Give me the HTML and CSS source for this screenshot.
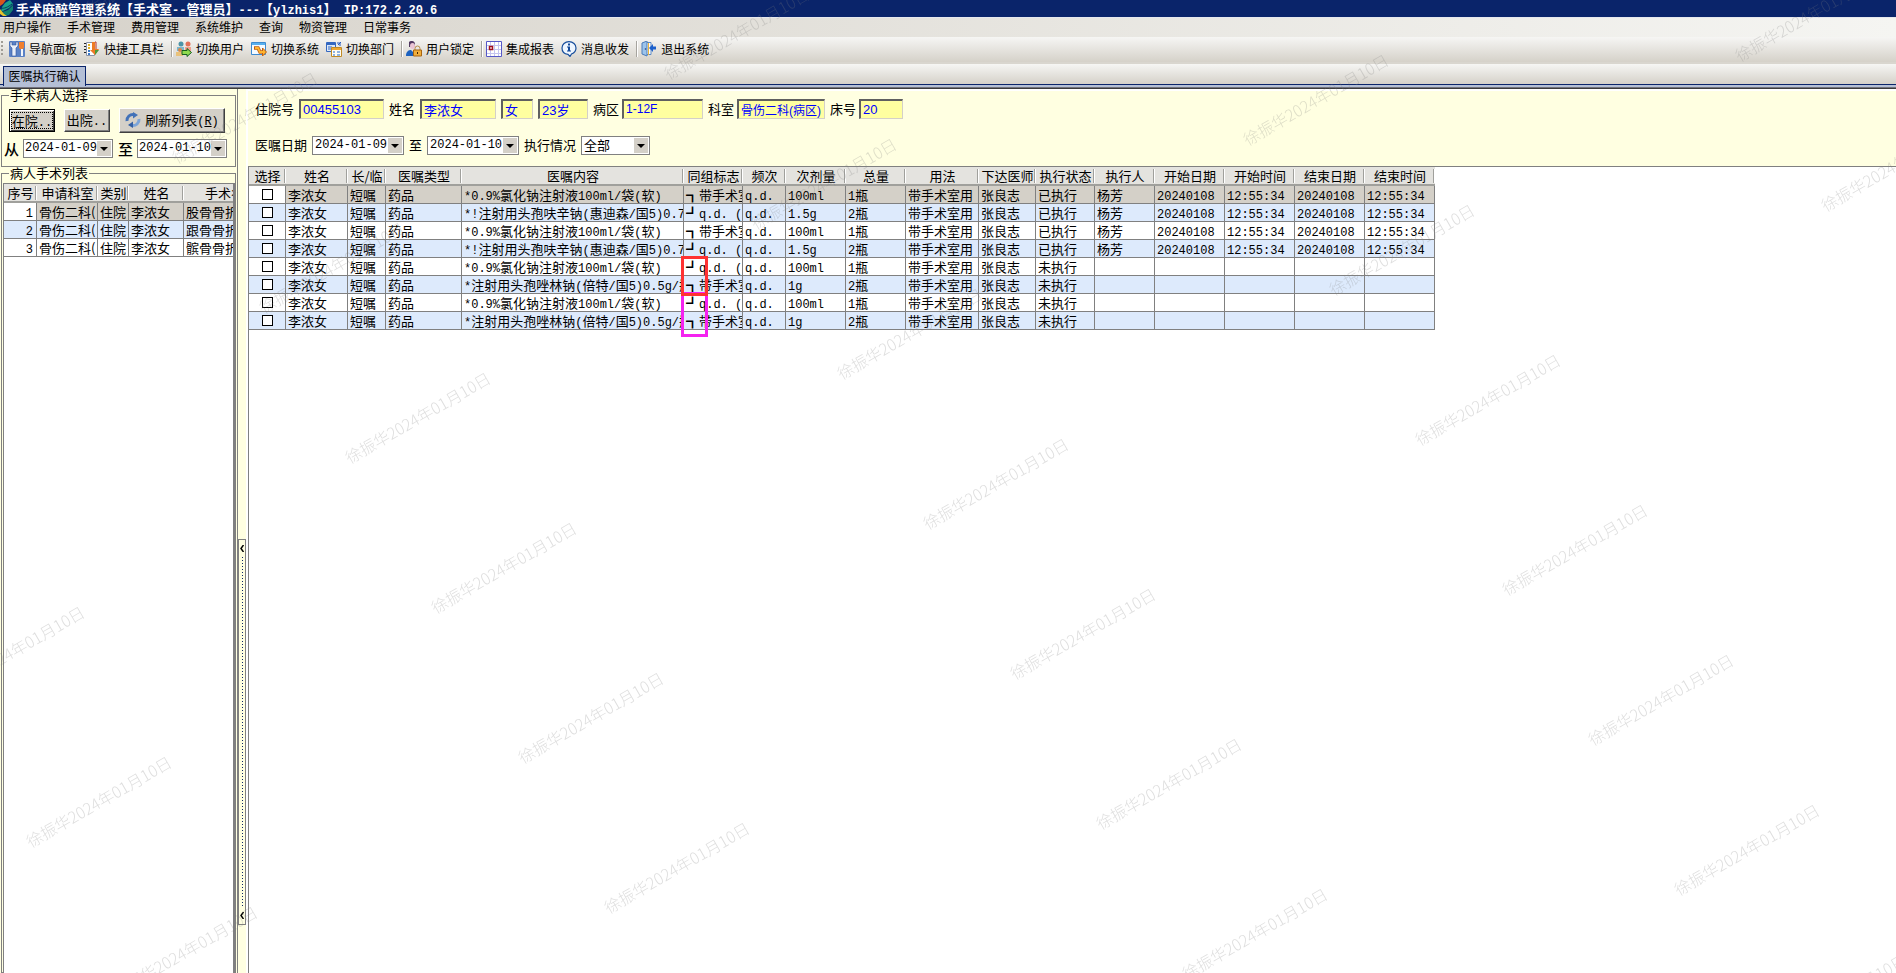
FILE: index.html
```html
<!DOCTYPE html>
<html lang="zh-CN">
<head>
<meta charset="utf-8">
<title>手术麻醉管理系统</title>
<link rel="stylesheet" href="styles.css">
</head>
<body>
<header class="titlebar">
  <svg class="logo" width="14" height="17" viewBox="0 0 14 17"><path d="M0 0h6l-3 4-3 2z" fill="#d8541c"/><path d="M5 3l5-3 3 4-4 4-8 4 1-5z" fill="#19a08c"/><path d="M13 5v5l-4 5-4 1-3-4 6-2z" fill="#12806f"/><path d="M0 9l4 5 3 2H3L0 14z" fill="#e8c22c"/><path d="M1 8c3 1 7-1 11-4" stroke="#063a5c" fill="none"/></svg>
  <h1 class="title">手术麻醉管理系统【手术室<span class="en">--</span>管理员】<span class="en">---</span>【<span class="en">ylzhis1</span>】<span class="en">&nbsp;IP:172.2.20.6</span></h1>
</header>
<nav class="menubar">
  <button>用户操作</button><button>手术管理</button><button>费用管理</button><button>系统维护</button><button>查询</button><button>物资管理</button><button>日常事务</button>
</nav>
<div class="toolbar">
  <span class="grip"></span>
  <button><svg width="16" height="16" viewBox="0 0 16 16"><rect width="16" height="16" rx="1" fill="#5b82c6"/><path d="M1 1v4l2 2v8h4V7l2-2V1H7v3H3V1z" fill="#e9eef8" stroke="#34549c" stroke-width=".6"/><path d="M10 1h5v6l-2 1h-2l-1-1z" fill="#f08030"/><path d="M12 8h2v7h-2z" fill="#f4f6fa"/></svg>导航面板</button>
  <button><svg width="16" height="16" viewBox="0 0 16 16"><path d="M2.500 1.500h8v13h-8z" fill="#fff" stroke="#8a93a8"/><path d="M1 2v1M1 5v1M1 8v1M1 11v1" stroke="#222" stroke-width="2"/><path d="M4 4h2M4 7h2" stroke="#e0b020" stroke-width="2"/><path d="M4 10h2M4 13h2" stroke="#3a78c8" stroke-width="2"/><path d="M8 1h3v7h4l-4 6-5-5h2z" fill="#ee7a24"/><path d="M11 1h1v7" fill="none" stroke="#b8332a"/><path d="M11 9h4l-4 5z" fill="#4b9a3b"/></svg>快捷工具栏</button>
  <span class="sep"></span>
  <button><svg width="16" height="16" viewBox="0 0 16 16"><circle cx="5" cy="3" r="2.500" fill="#4c94a8"/><circle cx="12" cy="3" r="2.500" fill="#e2725a"/><path d="M1 6h7v4H1z" fill="#79b8d0"/><path d="M9 6h6v4H9z" fill="#f0a08c"/><circle cx="4" cy="9" r="2" fill="#d9874c"/><path d="M0 11h7v4H0z" fill="#e9c27a"/><path d="M6 9.500h5v-2l4.500 4-4.500 4v-2H6z" fill="#8edb4e" stroke="#175f20"/></svg>切换用户</button>
  <button><svg width="16" height="16" viewBox="0 0 16 16"><path d="M.5 1.500h14v12H.5z" fill="#f4faff" stroke="#3d8ad0"/><path d="M1 2h13v2H1z" fill="#58b0ee"/><path d="M3 7h4l2 4h3" fill="none" stroke="#c05c10" stroke-width="3.500"/><path d="M11.500 7l4 4-4 4z" fill="#ffb52e" stroke="#c05c10"/><path d="M4 7h3l2 4h3" fill="none" stroke="#ffb52e" stroke-width="1.800"/></svg>切换系统</button>
  <button><svg width="16" height="16" viewBox="0 0 16 16"><path d="M.5 1.500h9v9h-9z" fill="#dce8f8" stroke="#3468c0"/><path d="M1 2h8v2H1z" fill="#3468c0"/><path d="M2 6h4M2 8h4" stroke="#3468c0"/><path d="M11 2h3v3M12 4l3-3" fill="none" stroke="#2458c0"/><path d="M5.500 6.500h10v9h-10z" fill="#fffdf4" stroke="#c08a24"/><path d="M6 7h9v2H6z" fill="#f0a832"/><path d="M7 10h2v2H7zM11 10h3v2h-3zM7 13h2v2H7zM11 13h3v2h-3z" fill="#8eb4e4"/></svg>切换部门</button>
  <span class="sep"></span>
  <button><svg width="16" height="16" viewBox="0 0 16 16"><path d="M3 1c2-2 6-1 6 2v3H3z" fill="#503860"/><ellipse cx="6.500" cy="5" rx="2.500" ry="3" fill="#eac4d4"/><path d="M0 15c0-5 3-6 5-6l2 2 2-2c2 0 3 2 3 6z" fill="#1c62c0"/><path d="M9 9V7.500a2.500 2.500 0 0 1 5 0V9" fill="none" stroke="#b58a48"/><path d="M7.500 9h8v6h-8z" fill="#f0ae3c" stroke="#a86510"/><path d="M11 11h1v2h-1z" fill="#402000"/></svg>用户锁定</button>
  <span class="sep"></span>
  <button><svg width="16" height="16" viewBox="0 0 16 16"><path d="M.5.5h15v15H.5z" fill="#fff" stroke="#5658c8"/><path d="M1 4.500h14M1 8.500h14M1 12.500h14M4.500 1v14M8.500 1v14M12.500 1v14" stroke="#c4c4f0"/><path d="M3.500 5.500h3v3h-3z" fill="#fff" stroke="#a01020" stroke-width="1.500"/></svg>集成报表</button>
  <button><svg width="16" height="16" viewBox="0 0 16 16"><path d="M8 .7c4 0 7 2.800 7 6.300 0 3-2 5-4.500 6L9 15.500 7 13.300C3.500 13 1 10.500 1 7 1 3.500 4 .7 8 .7z" fill="#eef6ff" stroke="#174e9c" stroke-width="1.200"/><path d="M7 2.500h2v2H7zM6 5.500h3v4h1v1H6v-1h1v-3H6z" fill="#134a9c"/></svg>消息收发</button>
  <span class="sep"></span>
  <button><svg width="16" height="16" viewBox="0 0 16 16"><path d="M3 1.500h7v12H3z" fill="#fff" stroke="#5a88c4"/><path d="M1 2l5-2v15l-5-2z" fill="#9cc4ec" stroke="#4c7cb8"/><path d="M7 2h1v12H7z" fill="#e8b43c"/><circle cx="4.500" cy="8" r=".8" fill="#204080"/><path d="M15 5.500h-3V3L8 7l4 4V8.500h3z" fill="#1c60cc"/></svg>退出系统</button>
</div>
<div class="tabs"><button class="tab">医嘱执行确认</button></div>

<main class="work">
  <aside class="side">
    <fieldset class="group">
      <legend>手术病人选择</legend>
      <div class="actions">
        <button class="btn focus"><span class="face">在院<span class="en">..</span></span></button>
        <button class="btn"><span>出院<span class="en">..</span></span></button>
        <button class="btn refresh"><svg width="16" height="16" viewBox="0 0 16 16"><path d="M2 9A6 6 0 0 1 9 2.500" fill="none" stroke="#4272b8" stroke-width="3"/><path d="M8 0l5 3-5 3.500z" fill="#4272b8"/><path d="M14 7a6 6 0 0 1-7 6.500" fill="none" stroke="#7ca4d8" stroke-width="3"/><path d="M8 16l-5-3 5-3.500z" fill="#3460a4"/></svg><span>刷新列表<span class="en">(<u>R</u>)</span></span></button>
      </div>
      <div class="range">
        <label for="from">从</label><span class="combo"><select id="from" class="en"><option>2024-01-09</option></select></span>
        <label for="to">至</label><span class="combo"><select id="to" class="en"><option>2024-01-10</option></select></span>
      </div>
    </fieldset>
    <fieldset class="group list">
      <legend>病人手术列表</legend>
      <div class="clip">
      <table class="grid patients">
        <colgroup><col class="w33"><col class="w61"><col class="w31"><col class="w55"><col class="w94"></colgroup>
        <thead><tr><th>序号</th><th>申请科室</th><th>类别</th><th>姓名</th><th>手术名称</th></tr></thead>
        <tbody>
          <tr class="cur"><td class="en">1</td><td>骨伤二科(</td><td>住院</td><td>李浓女</td><td>股骨骨折术</td></tr>
          <tr><td class="en">2</td><td>骨伤二科(</td><td>住院</td><td>李浓女</td><td>跟骨骨折术</td></tr>
          <tr><td class="en">3</td><td>骨伤二科(</td><td>住院</td><td>李浓女</td><td>髌骨骨折术</td></tr>
        </tbody>
      </table>
      </div>
    </fieldset>
  </aside>
  <div class="splitter"><button class="handle" aria-label="折叠"><svg width="4" height="7" viewBox="0 0 4 7"><path d="M3.500 0L1 3.500 3.500 7" fill="none" stroke="#000" stroke-width="1.500"/></svg><i></i><svg width="4" height="7" viewBox="0 0 4 7"><path d="M3.500 0L1 3.500 3.500 7" fill="none" stroke="#000" stroke-width="1.500"/></svg></button></div>
  <section class="content">
    <form class="form">
      <div class="line">
        <label for="no">住院号</label><input id="no" class="f85" value="00455103">
        <label for="nm">姓名</label><input id="nm" class="f76" value="李浓女">
        <input aria-label="性别" class="f32" value="女">
        <input aria-label="年龄" class="f50" value="23岁">
        <label for="wd" class="tight">病区</label><input id="wd" class="f81" value="1-12F">
        <label for="dp" class="tight">科室</label><input id="dp" class="f88" value="骨伤二科(病区)">
        <label for="bed" class="tight">床号</label><input id="bed" class="f44" value="20">
      </div>
      <div class="line">
        <label for="d1">医嘱日期</label><span class="combo"><select id="d1" class="en"><option>2024-01-09</option></select></span>
        <label for="d2">至</label><span class="combo"><select id="d2" class="en"><option>2024-01-10</option></select></span>
        <label for="st">执行情况</label><span class="combo small"><select id="st"><option>全部</option></select></span>
      </div>
    </form>
    <div class="sheet">
      <table class="grid orders">
        <colgroup><col class="w37"><col class="w62"><col class="w38"><col class="w76"><col class="w222"><col class="w59"><col class="w43"><col class="w60"><col class="w60"><col class="w73"><col class="w57"><col class="w59"><col class="w60"><col class="w70"><col class="w70"><col class="w70"><col class="w70"></colgroup>
        <thead><tr><th>选择</th><th>姓名</th><th>长/临</th><th>医嘱类型</th><th>医嘱内容</th><th>同组标志</th><th>频次</th><th>次剂量</th><th>总量</th><th>用法</th><th>下达医师</th><th>执行状态</th><th>执行人</th><th>开始日期</th><th>开始时间</th><th>结束日期</th><th>结束时间</th></tr></thead>
        <tbody>
          <tr class="cur"><td><input type="checkbox" aria-label="选择 1"></td><td>李浓女</td><td>短嘱</td><td>药品</td><td><span class="en">*0.9%</span>氯化钠注射液<span class="en">100ml/</span>袋<span class="en">(</span>软<span class="en">)</span></td><td>┓带手术室用</td><td class="en">q.d.</td><td class="en">100ml</td><td><span class="en">1</span>瓶</td><td>带手术室用</td><td>张良志</td><td>已执行</td><td>杨芳</td><td class="en">20240108</td><td class="en">12:55:34</td><td class="en">20240108</td><td class="en">12:55:34</td></tr>
          <tr><td><input type="checkbox" aria-label="选择 2"></td><td>李浓女</td><td>短嘱</td><td>药品</td><td><span class="en">*!</span>注射用头孢呋辛钠<span class="en">(</span>惠迪森<span class="en">/</span>国<span class="en">5)0.75g</span></td><td>┛<span class="en">q.d. (</span></td><td class="en">q.d.</td><td class="en">1.5g</td><td><span class="en">2</span>瓶</td><td>带手术室用</td><td>张良志</td><td>已执行</td><td>杨芳</td><td class="en">20240108</td><td class="en">12:55:34</td><td class="en">20240108</td><td class="en">12:55:34</td></tr>
          <tr><td><input type="checkbox" aria-label="选择 3"></td><td>李浓女</td><td>短嘱</td><td>药品</td><td><span class="en">*0.9%</span>氯化钠注射液<span class="en">100ml/</span>袋<span class="en">(</span>软<span class="en">)</span></td><td>┓带手术室用</td><td class="en">q.d.</td><td class="en">100ml</td><td><span class="en">1</span>瓶</td><td>带手术室用</td><td>张良志</td><td>已执行</td><td>杨芳</td><td class="en">20240108</td><td class="en">12:55:34</td><td class="en">20240108</td><td class="en">12:55:34</td></tr>
          <tr><td><input type="checkbox" aria-label="选择 4"></td><td>李浓女</td><td>短嘱</td><td>药品</td><td><span class="en">*!</span>注射用头孢呋辛钠<span class="en">(</span>惠迪森<span class="en">/</span>国<span class="en">5)0.75g</span></td><td>┛<span class="en">q.d. (</span></td><td class="en">q.d.</td><td class="en">1.5g</td><td><span class="en">2</span>瓶</td><td>带手术室用</td><td>张良志</td><td>已执行</td><td>杨芳</td><td class="en">20240108</td><td class="en">12:55:34</td><td class="en">20240108</td><td class="en">12:55:34</td></tr>
          <tr><td><input type="checkbox" aria-label="选择 5"></td><td>李浓女</td><td>短嘱</td><td>药品</td><td><span class="en">*0.9%</span>氯化钠注射液<span class="en">100ml/</span>袋<span class="en">(</span>软<span class="en">)</span></td><td>┛<span class="en">q.d. (</span></td><td class="en">q.d.</td><td class="en">100ml</td><td><span class="en">1</span>瓶</td><td>带手术室用</td><td>张良志</td><td>未执行</td><td></td><td></td><td></td><td></td><td></td></tr>
          <tr><td><input type="checkbox" aria-label="选择 6"></td><td>李浓女</td><td>短嘱</td><td>药品</td><td><span class="en">*</span>注射用头孢唑林钠<span class="en">(</span>倍特<span class="en">/</span>国<span class="en">5)0.5g/</span>瓶</td><td>┓带手术室用</td><td class="en">q.d.</td><td class="en">1g</td><td><span class="en">2</span>瓶</td><td>带手术室用</td><td>张良志</td><td>未执行</td><td></td><td></td><td></td><td></td><td></td></tr>
          <tr><td><input type="checkbox" aria-label="选择 7"></td><td>李浓女</td><td>短嘱</td><td>药品</td><td><span class="en">*0.9%</span>氯化钠注射液<span class="en">100ml/</span>袋<span class="en">(</span>软<span class="en">)</span></td><td>┛<span class="en">q.d. (</span></td><td class="en">q.d.</td><td class="en">100ml</td><td><span class="en">1</span>瓶</td><td>带手术室用</td><td>张良志</td><td>未执行</td><td></td><td></td><td></td><td></td><td></td></tr>
          <tr><td><input type="checkbox" aria-label="选择 8"></td><td>李浓女</td><td>短嘱</td><td>药品</td><td><span class="en">*</span>注射用头孢唑林钠<span class="en">(</span>倍特<span class="en">/</span>国<span class="en">5)0.5g/</span>瓶</td><td>┓带手术室用</td><td class="en">q.d.</td><td class="en">1g</td><td><span class="en">2</span>瓶</td><td>带手术室用</td><td>张良志</td><td>未执行</td><td></td><td></td><td></td><td></td><td></td></tr>
        </tbody>
      </table>
      <span class="mark magenta"></span>
      <span class="mark red"></span>
    </div>
  </section>
</main>
<svg class="watermark" id="watermark" aria-hidden="true"></svg>
<script src="script.js"></script>
</body>
</html>
```
FILE: styles.css
```css
* { box-sizing: border-box; }
body {
  margin: 0;
  height: 100vh;
  display: flex;
  flex-direction: column;
  overflow: hidden;
  background: #d4d0c8;
  color: #000;
  font: 13px/16px "Noto Sans CJK SC", sans-serif;
}
button, input, select { font: inherit; color: inherit; margin: 0; padding: 0; border: 0; background: none; border-radius: 0; }
svg { display: block; flex: none; }
.en { font-family: "Liberation Mono", "Noto Sans CJK SC", monospace; font-size: 12px; }
span.en { line-height: 0; }

.titlebar { display: flex; align-items: center; gap: 2px; height: 17px; background: #0a246a; color: #fff; }
.title { margin: 0; font-size: 13px; line-height: 15px; font-weight: 700; white-space: pre; }
.menubar { display: flex; align-items: center; gap: 16px; height: 20px; padding: 0 3px 1px; border-top: 1px solid #e6e8ee; background: linear-gradient(90deg, #d6d2ca, #f5f5f2); font-size: 12px; }
.toolbar { display: flex; align-items: center; gap: 7px; height: 27px; padding: 0 1px 1px; border-bottom: 2px solid #d9d6cf; background: linear-gradient(#f6f6f4, #d5d1c9); font-size: 12px; }
.toolbar button { display: flex; align-items: center; gap: 4px; }
.grip { width: 2px; height: 16px; margin-right: -1px; background: repeating-linear-gradient(#a09d96 0 2px, transparent 2px 4px); }
.sep { width: 1px; height: 16px; margin-right: -3px; background: #a6a49e; box-shadow: 1px 0 #fff; }
.tabs { height: 25px; padding: 2px 3px 0; background: linear-gradient(#f6f6f4, #d5d1c9 20px, #0a246a 20px, #0a246a 21px, #b4bfd6 21px, #b4bfd6 23px, #71717b 23px, #71717b 24px, #3c3c3c 24px); }
.tab { display: block; width: 83px; height: 20px; padding-bottom: 2px; border: 1px solid #0a246a; border-bottom: 0; background: #b4bfd6; font-size: 12px; line-height: 16px; }

.work { flex: 1; min-height: 0; display: flex; background: #ffffe1; }
.side { width: 238px; flex: none; display: flex; flex-direction: column; padding-left: 1px; border-right: 1px solid #808080; overflow: hidden; }
.group { min-width: 0; margin: 0 1px 0 0; padding: 0 0 0 7px; border: 1px solid #808080; height: 78px; flex: none; }
.group legend { padding: 0 1px; line-height: 12px; }
.actions { display: flex; align-items: center; gap: 9px; height: 38px; }
.btn { width: 46px; height: 23px; display: flex; align-items: center; justify-content: center; background: #d4d0c8; border: 1px solid; border-color: #fff #404040 #404040 #fff; box-shadow: inset -1px -1px #808080; white-space: nowrap; }
.btn.focus { border-color: #000; box-shadow: inset 1px 1px #fff, inset -1px -1px #404040; }
.face { outline: 1px dotted #000; line-height: 15px; }
.btn.refresh { width: 106px; height: 25px; gap: 4px; }
.range { display: flex; align-items: center; margin-left: -5px; }
.range label { width: 19px; font-size: 15px; font-weight: 500; }
.range .combo + label { width: 24px; padding-left: 5px; }
.combo { position: relative; display: block; width: 90px; }
.combo select { display: block; width: 100%; height: 19px; padding: 0 12px 1px 1px; appearance: none; background: #fff; border: 1px solid #808080; }
.combo::before { content: ""; position: absolute; right: 2px; top: 2px; bottom: 2px; width: 14px; background: #d4d0c8; pointer-events: none; }
.combo::after { content: ""; position: absolute; right: 5px; top: 8px; border: 4px solid transparent; border-top-color: #000; border-bottom: 0; pointer-events: none; }
.list { flex: 1; padding: 0; min-height: 0; }
.list legend { margin-left: 7px; }
.clip { height: 100vh; margin: 4px 0 0 1px; overflow: hidden; background: #fff; border: solid #808080; border-width: 1px 2px 0 1px; }

.splitter { width: 8px; flex: none; }
.handle { display: flex; flex-direction: column; align-items: center; gap: 5px; width: 8px; height: 386px; margin-top: 450px; padding: 5px 0; border: 1px solid #808080; }
.handle i { flex: 1; width: 1px; background: repeating-linear-gradient(#0a246a 0 1px, transparent 1px 3px); }

.content { flex: 1; min-width: 0; display: flex; flex-direction: column; border: solid #fff; border-width: 2px 0 0 2px; }
.form { height: 75px; flex: none; padding: 8px 7px 0; display: flex; flex-direction: column; gap: 16px; }
.line { display: flex; align-items: center; gap: 5px; height: 20px; white-space: nowrap; }
.line input { height: 20px; padding: 0 2px 1px; background: #ffffa0; color: #00f; font-family: "Liberation Sans", "Noto Sans CJK SC", sans-serif; border: solid; border-width: 2px 1px 1px 2px; border-color: #606060 #d4d0c8 #d4d0c8 #606060; }
.line .combo { width: 92px; }
.line .combo select { padding-left: 2px; }
.line .combo.small { width: 69px; }
.tight { margin-right: -2px; }
.f85 { width: 85px; } .f76 { width: 76px; } .f32 { width: 32px; } .f50 { width: 50px; } .f44 { width: 44px; }
.line .f81 { width: 81px; font-size: 12px; }
.line .f88 { width: 88px; font-size: 12px; }

.sheet { position: relative; flex: 1; background: #fff; border: solid #808080; border-width: 1px 0 0 1px; }
.grid { table-layout: fixed; border-collapse: separate; border-spacing: 0; width: 1px; }
.grid th, .grid td { height: 18px; padding: 0 0 0 2px; border: solid #808080; border-width: 0 1px 1px 0; text-align: left; font-weight: 400; line-height: 17px; vertical-align: baseline; white-space: nowrap; overflow: hidden; }
.grid td.en { line-height: 12px; }
.grid th { padding: 0; height: 19px; text-align: center; border-right: 0; border-bottom: 2px solid #a0a09c; background: linear-gradient(#a0a09c, #a0a09c) right 1px center / 1px 14px no-repeat, linear-gradient(#fff, #fff) right center / 1px 14px no-repeat, #e4e3df; }
.grid tbody tr { background: #fff; }
.grid tbody tr:nth-child(even) { background: #ddeafc; }
.grid tbody tr.cur { background: #d4d0c8; }
.grid .cur td:first-child { background: #fff; }
.patients td:first-child { text-align: right; padding-right: 3px; }
.orders td:first-child { padding: 0; vertical-align: middle; }
.orders input { display: block; width: 11px; height: 11px; margin: 0 auto; appearance: none; background: #fff; border: 1px solid #000; }
.w31 { width: 31px; } .w33 { width: 33px; } .w37 { width: 37px; } .w38 { width: 38px; } .w43 { width: 43px; }
.w55 { width: 55px; } .w57 { width: 57px; } .w59 { width: 59px; } .w60 { width: 60px; } .w61 { width: 61px; }
.w62 { width: 62px; } .w70 { width: 70px; } .w73 { width: 73px; } .w76 { width: 76px; } .w94 { width: 94px; } .w222 { width: 222px; }
.mark { position: absolute; left: 432px; width: 27px; border: 3px solid; pointer-events: none; }
.red { top: 89px; height: 40px; border-color: #ff3232; }
.magenta { top: 125px; height: 45px; border-color: #f522f0; }
.watermark { position: fixed; inset: 0; width: 100%; height: 100%; pointer-events: none; }
.watermark text { font-size: 16px; font-weight: 300; fill: rgba(128, 128, 128, .26); text-anchor: middle; }
```
FILE: script.js
```js
// Repeats the user/date stamp over the whole window on a slanted lattice.
const layer = document.getElementById('watermark');
for (let j = -1; j < 6; j++) {
  for (let i = -8; i < 10; i++) {
    const x = Math.round(418 + 86.3 * i + 492 * j);
    const y = 418 + 150 * i - 84 * j;
    if (x < -80 || y < -50 || x > innerWidth + 80 || y > innerHeight + 50) continue;
    const t = document.createElementNS('http://www.w3.org/2000/svg', 'text');
    t.setAttribute('transform', `translate(${x} ${y}) rotate(-30)`);
    t.setAttribute('dy', '6');
    t.textContent = '徐振华2024年01月10日';
    layer.appendChild(t);
  }
}
```
